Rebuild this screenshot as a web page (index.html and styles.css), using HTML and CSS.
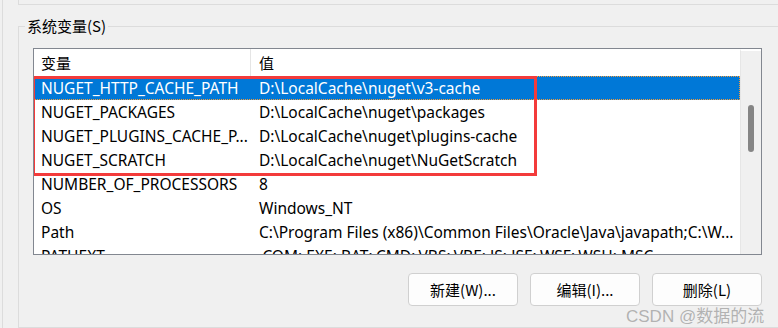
FILE: index.html
```html
<!DOCTYPE html>
<html lang="zh-CN">
<head>
    <meta charset="UTF-8">
    <title>系统变量</title>
    <link rel="stylesheet" href="styles.css">
</head>
<body>
    <div class="window">
        <div class="prev-group"></div>

        <fieldset class="group">
            <legend>系统变量(S)</legend>

            <div class="listbox">
                <div class="list-main">
                    <div class="list-header">
                        <div class="col col-name">变量</div>
                        <div class="col col-value">值</div>
                    </div>
                    <div class="row selected">
                        <div class="col col-name">NUGET_HTTP_CACHE_PATH</div>
                        <div class="col col-value">D:\LocalCache\nuget\v3-cache</div>
                    </div>
                    <div class="row">
                        <div class="col col-name">NUGET_PACKAGES</div>
                        <div class="col col-value">D:\LocalCache\nuget\packages</div>
                    </div>
                    <div class="row">
                        <div class="col col-name">NUGET_PLUGINS_CACHE_P...</div>
                        <div class="col col-value">D:\LocalCache\nuget\plugins-cache</div>
                    </div>
                    <div class="row">
                        <div class="col col-name">NUGET_SCRATCH</div>
                        <div class="col col-value">D:\LocalCache\nuget\NuGetScratch</div>
                    </div>
                    <div class="row">
                        <div class="col col-name">NUMBER_OF_PROCESSORS</div>
                        <div class="col col-value">8</div>
                    </div>
                    <div class="row">
                        <div class="col col-name">OS</div>
                        <div class="col col-value">Windows_NT</div>
                    </div>
                    <div class="row">
                        <div class="col col-name">Path</div>
                        <div class="col col-value">C:\Program Files (x86)\Common Files\Oracle\Java\javapath;C:\W...</div>
                    </div>
                    <div class="row">
                        <div class="col col-name">PATHEXT</div>
                        <div class="col col-value">.COM;.EXE;.BAT;.CMD;.VBS;.VBE;.JS;.JSE;.WSF;.WSH;.MSC</div>
                    </div>

                    <!-- 강조 표시 박스 -->
                    <div class="highlight"></div>
                </div>
                <div class="scrollbar">
                    <div class="thumb"></div>
                </div>
            </div>

            <div class="buttons">
                <button class="btn">新建(W)...</button>
                <button class="btn">编辑(I)...</button>
                <button class="btn">删除(L)</button>
            </div>

            <div class="watermark">CSDN @数据的流</div>
        </fieldset>
    </div>
</body>
</html>
```

FILE: styles.css
```css
* {
    margin: 0;
    padding: 0;
    box-sizing: border-box;
}

body {
    font-family: 'Noto Sans', 'Noto Sans CJK SC', sans-serif;
    font-size: 15.5px;
    color: #000;
    background: #f0f0f0;
    width: 778px;
    height: 328px;
    overflow: hidden;
}

.window {
    margin-left: 2px;
    height: 328px;
    border-left: 1px solid #dcdcdc;
    padding-left: 15px;
}

.prev-group {
    height: 5px;
    border-left: 1px solid #dcdcdc;
    border-bottom: 1px solid #dcdcdc;
    margin-right: -10px;
}

.group {
    position: relative;
    margin-top: 11px;
    height: 312px;
    border: 1px solid #dcdcdc;
    border-right: none;
    margin-right: -10px;
    padding: 12px 0 0 14px;
}

.group legend {
    font-family: 'Noto Sans CJK SC', sans-serif;
    font-size: 15px;
    margin-left: -8px;
    padding: 0 2px;
    line-height: 20px;
}

.listbox {
    display: flex;
    width: 729px;
    height: 207px;
    border: 1px solid #828790;
    background: #fff;
    overflow: hidden;
}

.list-main {
    position: relative;
    flex: 1;
}

.list-header {
    display: flex;
    height: 27px;
    align-items: center;
}

.list-header .col {
    font-family: 'Noto Sans CJK SC', sans-serif;
    font-size: 15px;
}

.list-header .col-name {
    border-right: 1px solid #e5e5e5;
    height: 27px;
    line-height: 27px;
}

.row {
    display: flex;
    height: 24px;
    align-items: center;
    white-space: nowrap;
}

.col {
    padding-left: 7px;
    overflow: hidden;
}

.col-name {
    width: 217px;
    flex-shrink: 0;
}

.col-value {
    flex: 1;
    padding-left: 8px;
}

.row.selected {
    background: #0078d7;
    color: #fff;
    outline: 1px dotted #f29b3a;
    outline-offset: -1px;
}

.highlight {
    position: absolute;
    left: -2px;
    top: 27px;
    width: 505px;
    height: 100px;
    border: 3px solid #f33b3b;
}

.scrollbar {
    width: 21px;
    background: #f0f0f0;
    border-left: 1px solid #e6e6e6;
    border-top: 2px solid #fff;
    position: relative;
}

.thumb {
    position: absolute;
    left: 7px;
    top: 54px;
    width: 6px;
    height: 47px;
    background: #858585;
    border-radius: 3px;
}

.buttons {
    display: flex;
    justify-content: flex-end;
    gap: 12px;
    width: 729px;
    margin-top: 18px;
}

.btn {
    width: 110px;
    height: 33px;
    font-family: 'Noto Sans CJK SC', sans-serif;
    font-size: 15px;
    background: #fdfdfd;
    border: 1px solid #d0d0d0;
    border-radius: 4px;
    color: #000;
}

.watermark {
    position: absolute;
    left: 607px;
    top: 271px;
    line-height: 20px;
    white-space: nowrap;
    font-family: 'Liberation Sans', 'Noto Sans CJK SC', sans-serif;
    font-size: 17px;
    color: rgba(150, 150, 150, 0.7);
}
```
